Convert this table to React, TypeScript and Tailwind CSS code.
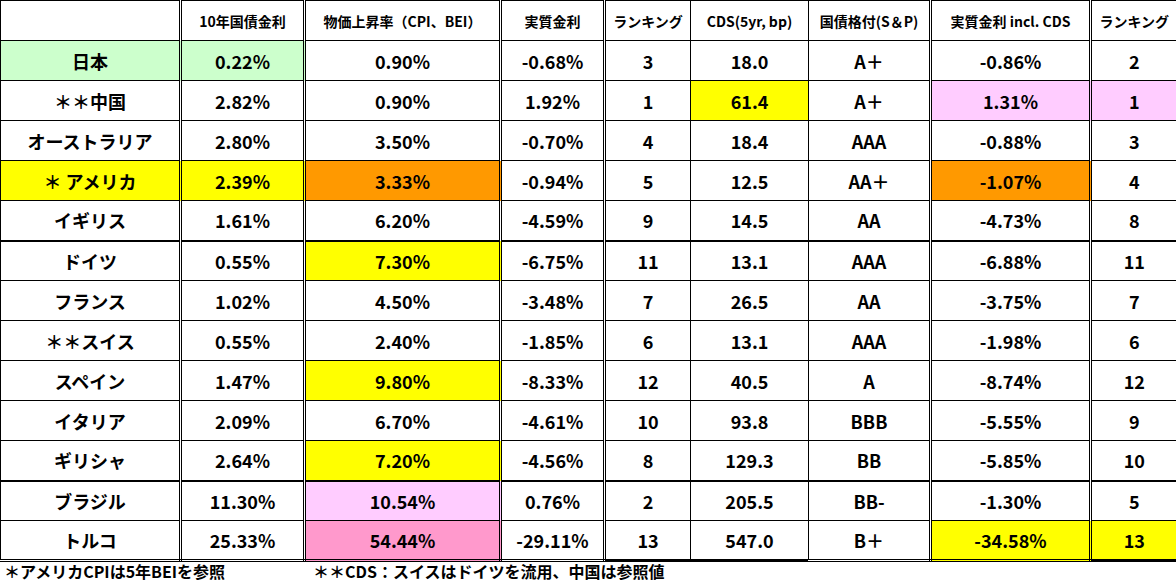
import React from "react";

type Cell = { v: string; bg?: string };

const GREEN = "bg-[#ccffcc]";
const YELLOW = "bg-[#ffff00]";
const ORANGE = "bg-[#ff9900]";
const LPINK = "bg-[#ffccff]";
const PINK = "bg-[#ff99cc]";

const columns = [
  { width: "w-[180px]", border: "border-r-[3px] border-r-black border-double" },
  { width: "w-[124px]", border: "border-r-[3px] border-r-black border-double" },
  { width: "w-[196px]", border: "border-r-[3px] border-r-black border-double" },
  { width: "w-[104px]", border: "border-r-[3px] border-r-black border-double" },
  { width: "w-[86px]", border: "border-r border-r-black" },
  { width: "w-[118px]", border: "border-r border-r-black" },
  { width: "w-[122px]", border: "border-r-[3px] border-r-black border-double" },
  { width: "w-[160px]", border: "border-r-[3px] border-r-black border-double" },
  { width: "w-[86px]", border: "" },
];

const headers = [
  "",
  "10年国債金利",
  "物価上昇率（CPI、BEI）",
  "実質金利",
  "ランキング",
  "CDS(5yr, bp)",
  "国債格付(S＆P)",
  "実質金利 incl. CDS",
  "ランキング",
];

function r(values: string[], colors: Record<number, string> = {}): Cell[] {
  return values.map((v, i) => ({ v, bg: colors[i] }));
}

const rows: Cell[][] = [
  r(["日本", "0.22%", "0.90%", "-0.68%", "3", "18.0", "A＋", "-0.86%", "2"], { 0: GREEN, 1: GREEN }),
  r(["＊＊中国", "2.82%", "0.90%", "1.92%", "1", "61.4", "A＋", "1.31%", "1"], { 5: YELLOW, 7: LPINK, 8: LPINK }),
  r(["オーストラリア", "2.80%", "3.50%", "-0.70%", "4", "18.4", "AAA", "-0.88%", "3"]),
  r(["＊ アメリカ", "2.39%", "3.33%", "-0.94%", "5", "12.5", "AA＋", "-1.07%", "4"], { 0: YELLOW, 1: YELLOW, 2: ORANGE, 7: ORANGE }),
  r(["イギリス", "1.61%", "6.20%", "-4.59%", "9", "14.5", "AA", "-4.73%", "8"]),
  r(["ドイツ", "0.55%", "7.30%", "-6.75%", "11", "13.1", "AAA", "-6.88%", "11"], { 2: YELLOW }),
  r(["フランス", "1.02%", "4.50%", "-3.48%", "7", "26.5", "AA", "-3.75%", "7"]),
  r(["＊＊スイス", "0.55%", "2.40%", "-1.85%", "6", "13.1", "AAA", "-1.98%", "6"]),
  r(["スペイン", "1.47%", "9.80%", "-8.33%", "12", "40.5", "A", "-8.74%", "12"], { 2: YELLOW }),
  r(["イタリア", "2.09%", "6.70%", "-4.61%", "10", "93.8", "BBB", "-5.55%", "9"]),
  r(["ギリシャ", "2.64%", "7.20%", "-4.56%", "8", "129.3", "BB", "-5.85%", "10"], { 2: YELLOW }),
  r(["ブラジル", "11.30%", "10.54%", "0.76%", "2", "205.5", "BB-", "-1.30%", "5"], { 2: LPINK }),
  r(["トルコ", "25.33%", "54.44%", "-29.11%", "13", "547.0", "B＋", "-34.58%", "13"], { 2: PINK, 7: YELLOW, 8: YELLOW }),
];

function rowBottom(index: number) {
  if (index === 4 || index === 10) return "border-b-2 border-b-black";
  if (index === rows.length - 1) return "border-b-[3px] border-b-black";
  return "border-b border-b-black";
}

export default function App() {
  return (
    <div className="w-[1176px] h-[585px] overflow-hidden bg-white text-black font-['Noto_Sans_CJK_JP',sans-serif]">
      <table className="table-fixed border-collapse w-[1176px]">
        <colgroup>
          {columns.map((col, i) => (
            <col key={i} className={col.width} />
          ))}
        </colgroup>
        <thead>
          <tr>
            {headers.map((h, i) => (
              <th
                key={i}
                className={`h-[40px] p-0 text-center align-middle text-[14px] font-bold leading-none whitespace-nowrap border-t border-t-black border-b border-b-black ${
                  i === 0 ? "border-l border-l-black" : ""
                } ${columns[i].border}`}
              >
                {h}
              </th>
            ))}
          </tr>
        </thead>
        <tbody>
          {rows.map((row, ri) => (
            <tr key={ri}>
              {row.map((cell, ci) => (
                <td
                  key={ci}
                  className={`h-[40px] p-0 text-center align-middle text-[18px] font-bold leading-none whitespace-nowrap ${
                    ci === 0 ? "border-l border-l-black" : ""
                  } ${columns[ci].border} ${rowBottom(ri)} ${cell.bg ?? ""}`}
                >
                  {cell.v}
                </td>
              ))}
            </tr>
          ))}
        </tbody>
      </table>
      <div className="flex h-[18px] items-center text-[16px] font-bold leading-none">
        <span className="w-[313px] pl-[4px]">＊アメリカCPIは5年BEIを参照</span>
        <span>＊＊CDS：スイスはドイツを流用、中国は参照値</span>
      </div>
    </div>
  );
}
